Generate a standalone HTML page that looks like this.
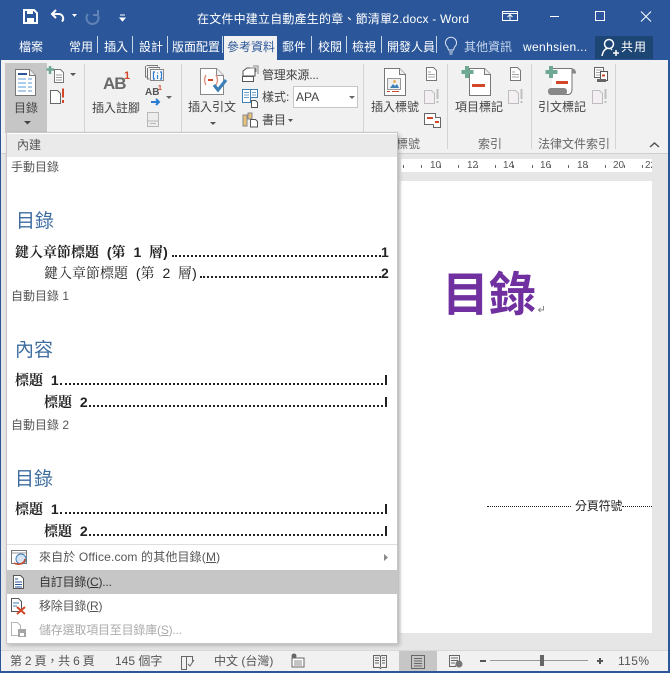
<!DOCTYPE html>
<html lang="zh-Hant"><head><meta charset="utf-8"><title>Word</title>
<style>
html,body{margin:0;padding:0}
body{width:670px;height:673px;overflow:hidden;position:relative;background:#E6E6E6;font-family:"Liberation Sans","Noto Sans CJK TC",sans-serif;font-size:12px;color:#444}
.a{position:absolute}
.t{position:absolute;white-space:nowrap;line-height:16px;font-size:12px;color:#444}
.w{color:#fff}
.sep{position:absolute;top:64px;height:85px;width:1px;background:#D4D4D4}
.tabsep{position:absolute;top:36px;height:17px;width:1px;background:#C9D6E8}
.toc{position:absolute;white-space:nowrap;font-size:14px;line-height:16px;color:#222;font-family:"Liberation Sans","Noto Serif CJK SC",serif;font-weight:700;word-spacing:4px}
.lead{position:absolute;height:0;border-bottom:2px dotted #222}
.h{position:absolute;color:#3E6DA0;font-size:19px;line-height:24px;white-space:nowrap}
.l{position:absolute;font-size:12px;line-height:16px;color:#555;white-space:nowrap}
.r{position:absolute;font-size:10px;line-height:12px;color:#555;top:160px}
svg{position:absolute;left:0;top:0;overflow:visible}
</style></head><body>
<div class="a" style="left:0;top:0;width:670px;height:60px;background:#2B579A"></div>
<div class="a" style="left:0;top:60px;width:670px;height:93px;background:#F1F1F1"></div>
<div class="a" style="left:0;top:153px;width:670px;height:1px;background:#D0D0D0"></div>
<div class="a" style="left:401px;top:159px;width:251px;height:13px;background:#fff"></div>
<div class="a" style="left:401px;top:181px;width:251px;height:452px;background:#fff"></div>
<div class="a" style="left:399px;top:181px;width:2px;height:452px;background:#EFEFEF"></div>
<div class="a" style="left:0;top:650px;width:670px;height:21px;background:#F1F1F1;border-top:1px solid #D8D8D8;box-sizing:border-box"></div>
<div class="a" style="left:399px;top:651px;width:38px;height:20px;background:#C6C6C6"></div>
<div class="a" style="left:0;top:671px;width:670px;height:2px;background:#2B579A"></div>
<div class="a" style="left:0;top:60px;width:1px;height:611px;background:#2B579A"></div>
<div class="a" style="left:668px;top:60px;width:2px;height:611px;background:#2B579A"></div>

<div class="t w" style="left:197px;top:11px;letter-spacing:.2px">在文件中建立自動產生的章、節清單2.docx - Word</div>
<div class="a" style="left:224px;top:36px;width:53px;height:24px;background:#F1F1F1"></div>
<div class="a" style="left:595px;top:36px;width:58px;height:23px;background:#1D4675"></div>
<div class="t w" style="left:19px;top:39px">檔案</div>
<div class="t w" style="left:69px;top:39px">常用</div><div class="tabsep" style="left:97px"></div>
<div class="t w" style="left:104px;top:39px">插入</div><div class="tabsep" style="left:132px"></div>
<div class="t w" style="left:139px;top:39px">設計</div><div class="tabsep" style="left:167px"></div>
<div class="t w" style="left:172px;top:39px">版面配置</div><div class="tabsep" style="left:222px"></div>
<div class="t" style="left:227px;top:39px;color:#2B579A">參考資料</div>
<div class="t w" style="left:282px;top:39px">郵件</div><div class="tabsep" style="left:311px"></div>
<div class="t w" style="left:318px;top:39px">校閱</div><div class="tabsep" style="left:346px"></div>
<div class="t w" style="left:352px;top:39px">檢視</div><div class="tabsep" style="left:381px"></div>
<div class="t w" style="left:387px;top:39px">開發人員</div><div class="tabsep" style="left:436px"></div>
<div class="t" style="left:464px;top:39px;color:#C9D8EE">其他資訊</div>
<div class="t w" style="left:523px;top:39px;letter-spacing:.35px">wenhsien...</div>
<div class="t w" style="left:621px;top:39px;letter-spacing:1px">共用</div>

<div class="a" style="left:5px;top:63px;width:42px;height:70px;background:#C6C6C6"></div>
<div class="sep" style="left:84px"></div><div class="sep" style="left:181px"></div><div class="sep" style="left:363px"></div><div class="sep" style="left:447px"></div><div class="sep" style="left:531px"></div><div class="sep" style="left:615px"></div>
<div class="t" style="left:14px;top:100px">目錄</div>
<div class="t" style="left:92px;top:100px">插入註腳</div>
<div class="t" style="left:188px;top:99px">插入引文</div>
<div class="t" style="left:262px;top:67px;letter-spacing:-.2px">管理來源...</div>
<div class="t" style="left:262px;top:89px">樣式:</div>
<div class="a" style="left:293px;top:86px;width:65px;height:22px;background:#fff;border:1px solid #C6C6C6;box-sizing:border-box"></div>
<div class="t" style="left:296px;top:89px">APA</div>
<div class="t" style="left:262px;top:112px">書目</div>
<div class="t" style="left:371px;top:99px">插入標號</div>
<div class="t" style="left:455px;top:99px">項目標記</div>
<div class="t" style="left:538px;top:99px">引文標記</div>
<div class="t" style="left:478px;top:136px;color:#666">索引</div>
<div class="t" style="left:538px;top:136px;color:#666">法律文件索引</div>
<div class="t" style="left:396px;top:136px;color:#666">標號</div>
<div class="a" style="left:103px;top:74px;font-size:17px;line-height:20px;font-weight:700;color:#6A6A6A;letter-spacing:-1px">AB</div>
<div class="a" style="left:124px;top:70px;font-size:11px;line-height:12px;font-weight:700;color:#D24726">1</div>
<div class="a" style="left:145px;top:87px;font-size:10px;line-height:12px;font-weight:700;color:#555">AB</div>
<div class="a" style="left:158px;top:85px;font-size:7px;line-height:8px;font-weight:700;color:#D24726">1</div>

<div class="r" style="left:430px">10</div><div class="r" style="left:467px">12</div><div class="r" style="left:503px">14</div><div class="r" style="left:540px">16</div><div class="r" style="left:577px">18</div><div class="r" style="left:613px">20</div><div class="r" style="left:645px;width:7px;overflow:hidden">22</div>

<div class="a" style="left:442px;top:265px;font-size:47px;line-height:60px;font-weight:700;color:#7030A0;white-space:nowrap">目錄</div>
<div class="lead" style="left:487px;top:506px;width:84px;border-bottom-width:1px;border-color:#222"></div>
<div class="t" style="left:575px;top:498px;color:#222;letter-spacing:-.2px">分頁符號</div>
<div class="lead" style="left:622px;top:506px;width:30px;border-bottom-width:1px;border-color:#222"></div>

<div class="t" style="left:10px;top:653px;color:#555;letter-spacing:-.2px">第 2 頁，共 6 頁</div>
<div class="t" style="left:115px;top:653px;color:#555">145 個字</div>
<div class="t" style="left:214px;top:653px;color:#555">中文 (台灣)</div>
<div class="t" style="left:618px;top:653px;color:#555;letter-spacing:.4px">115%</div>

<div class="a" style="left:6px;top:132px;width:392px;height:512px;background:#fff;border:1px solid #C6C6C6;box-sizing:border-box;box-shadow:2px 2px 4px rgba(0,0,0,.2)"></div>
<div class="a" style="left:7px;top:134px;width:390px;height:23px;background:#EAEAEA"></div>
<div class="t" style="left:17px;top:137px;color:#555">內建</div>
<div class="l" style="left:11px;top:159px">手動目錄</div>
<div class="h" style="left:16px;top:210px">目錄</div>
<div class="toc" style="left:15px;top:244px">鍵入章節標題 (第 1 層)</div><div class="lead" style="left:172px;top:255px;width:209px"></div><div class="toc" style="left:381px;top:244px">1</div>
<div class="toc" style="left:44px;top:265px;font-weight:400">鍵入章節標題 (第 2 層)</div><div class="lead" style="left:200px;top:276px;width:181px"></div><div class="toc" style="left:381px;top:265px">2</div>
<div class="l" style="left:11px;top:288px">自動目錄 1</div>
<div class="h" style="left:15px;top:339px">內容</div>
<div class="toc" style="left:15px;top:372px">標題 1</div><div class="lead" style="left:60px;top:383px;width:323px"></div><div class="a" style="left:385px;top:375px;width:2px;height:10px;background:#222"></div>
<div class="toc" style="left:44px;top:394px">標題 2</div><div class="lead" style="left:89px;top:405px;width:294px"></div><div class="a" style="left:385px;top:397px;width:2px;height:10px;background:#222"></div>
<div class="l" style="left:11px;top:417px">自動目錄 2</div>
<div class="h" style="left:15px;top:468px">目錄</div>
<div class="toc" style="left:15px;top:501px">標題 1</div><div class="lead" style="left:60px;top:512px;width:323px"></div><div class="a" style="left:385px;top:504px;width:2px;height:10px;background:#222"></div>
<div class="toc" style="left:44px;top:523px">標題 2</div><div class="lead" style="left:89px;top:534px;width:294px"></div><div class="a" style="left:385px;top:526px;width:2px;height:10px;background:#222"></div>
<div class="a" style="left:7px;top:544px;width:390px;height:1px;background:#DEDEDE"></div>
<div class="a" style="left:7px;top:570px;width:390px;height:24px;background:#C6C6C6"></div>
<div class="t" style="left:39px;top:549px;color:#555;letter-spacing:.15px">來自於 Office.com 的其他目錄(<u>M</u>)</div>
<div class="t" style="left:39px;top:574px;color:#333;letter-spacing:-.2px">自訂目錄(<u>C</u>)...</div>
<div class="t" style="left:39px;top:598px;color:#555;letter-spacing:-.2px">移除目錄(<u>R</u>)</div>
<div class="t" style="left:39px;top:622px;color:#ABABAB;letter-spacing:-.2px">儲存選取項目至目錄庫(<u>S</u>)...</div>

<svg width="670" height="673" viewBox="0 0 670 673" fill="none">
<!-- QAT -->
<path d="M24 10h10l3 3v10H24z" stroke="#fff" stroke-width="2"/><path d="M27 10h6v4h-6zM27 18h7v5h-7z" fill="#fff"/>
<path d="M56 10l-4 4 4 4M52 14h7a4.5 4.5 0 0 1 3 7.500" stroke="#fff" stroke-width="2"/><path d="M72 14h5l-2.500 3z" fill="#fff"/>
<path d="M98 10v5h-5M97 14a6 6 0 1 1-9 0" stroke="#6E8DBB" stroke-width="2" opacity=".8"/>
<path d="M120 15h5M120 18h5l-2.500 3z" stroke="#fff" fill="#fff"/>
<!-- window controls -->
<rect x="502.500" y="11.500" width="15" height="9" stroke="#fff"/><path d="M502 13.500h16M510 20v-5M507.500 17l2.500-2.500 2.500 2.500" stroke="#fff"/>
<path d="M550 16.500h9" stroke="#fff"/><rect x="595.500" y="11.500" width="9" height="9" stroke="#fff" stroke-width="1"/><path d="M641 11.500l10 10M651 11.500l-10 10" stroke="#fff"/>
<!-- bulb -->
<path d="M447.500 47a5.500 5.500 0 1 1 7 0l-1 3h-5z M449 52h4M449.500 54h3" stroke="#DDE6F3"/>
<!-- person -->
<circle cx="609" cy="44" r="4.500" stroke="#fff" stroke-width="1.500"/><path d="M602 56c1-5 3-7 5-7.500M611 49l1 1M613 53h6M616 50v6" stroke="#fff" stroke-width="1.500"/>
<!-- TOC icon -->
<path d="M15.500 69.500h14l6 6v20h-20z" fill="#fff" stroke="#777"/><path d="M29.500 69.500v6h6" fill="#eee" stroke="#777"/>
<path d="M18 74h9" stroke="#2B579A" stroke-width="2"/><path d="M18 79h8M28 79h4M18 83h8M28 83h4M18 87h8M28 87h4M18 91h8M28 91h4" stroke="#5B9BD5"/>
<path d="M24 121h7l-3.500 3.500z" fill="#444"/>
<!-- add text -->
<path d="M54.500 69.500h6l3 3v10h-9z" fill="#fff" stroke="#777"/><path d="M56 75h6M56 77.500h6M56 80h6" stroke="#777" stroke-width=".8"/><path d="M50 66v8M46.500 69.500h7.500" stroke="#6FA893" stroke-width="2.500"/><path d="M70 73h6l-3 3z" fill="#555"/>
<!-- update table -->
<path d="M50.500 90.500h7l3 3v10h-10z" fill="#fff" stroke="#666"/><path d="M63 88.500v9M63 100v3" stroke="#D24726" stroke-width="2"/>
<!-- footnote group -->
<path d="M146.500 65.500h11v1M148.500 67.500h11v1M145.500 66v11h2M147.500 68v11h2" stroke="#777"/><rect x="150.500" y="69.500" width="13" height="11" fill="#f8f8f8" stroke="#888"/>
<path d="M155 72h-1.500v7h1.500M160 72h1.500v7H160M157.500 72.500v1M157.500 75v4" stroke="#2B7CD3" stroke-width="1.200"/>
<path d="M151 102h8m-3-3l3 3-3 3" stroke="#2B7CD3" stroke-width="2"/>
<path d="M166 96h6l-3 3z" fill="#666"/>
<rect x="147.500" y="112.500" width="11" height="14" fill="#EDEDED" stroke="#B8B8B8"/><path d="M148 121h10" stroke="#B8B8B8"/><path d="M150 123.500h6" stroke="#B8B8B8"/>
<!-- citation -->
<path d="M200.500 68.500h16l7 7v19h-23z" fill="#fff" stroke="#888"/><path d="M216.500 68.500v7h7" fill="#eee" stroke="#888"/>
<path d="M206 75q-3 5 0 10M216 75q3 5 0 10" stroke="#E08A78" stroke-width="1.300"/><path d="M208 80h5" stroke="#D24726" stroke-width="2"/>
<path d="M214 85l4 5 8-10" stroke="#3D80B8" stroke-width="3.200"/>
<path d="M210 122h6l-3 3z" fill="#555"/>
<path d="M243 76v-5l4-3h8v8h-12zM242.500 76.500h11v5h-11z" fill="#fff" stroke="#555"/><path d="M250 68h6v4M253 66h5v8" stroke="#888"/>
<rect x="242.500" y="89.500" width="8" height="13" fill="#fff" stroke="#3D80B8"/><rect x="250.500" y="89.500" width="7" height="8" fill="#fff" stroke="#3D80B8"/><path d="M244 92.500h5M244 95h5M244 97.500h5M252 92.500h4M252 95h4" stroke="#3D80B8" stroke-width=".8"/><path d="M251.500 100.500h4l2 2v5h-6z" fill="#fff" stroke="#555"/>
<path d="M243 115h4v11h-4zM248 113h4v6h-4z" fill="#E8C27A" stroke="#888"/><path d="M250.500 119.500h5l2 2v5.500h-7z" fill="#fff" stroke="#555"/>
<path d="M288 119h5l-2.500 3z" fill="#555"/>
<path d="M349 96h6l-3 3z" fill="#666"/>
<!-- caption -->
<path d="M384.500 68.500h15l6 6v21h-21z" fill="#fff" stroke="#777"/><path d="M399.500 68.500v6h6" fill="#eee" stroke="#777"/>
<rect x="387.500" y="78.500" width="13" height="11" fill="#EFEFEF" stroke="#999"/><path d="M390 88l3-4 2 2 2-2 2 4z" fill="#3D80B8"/><circle cx="394.500" cy="81.500" r="1.500" fill="#E8B060"/><path d="M387 91.500h3M392 91.500h7" stroke="#D24726"/>
<path d="M426.500 67.500h7l3 3v10h-10z" fill="#fff" stroke="#777"/><path d="M428 72h3M428 74.500h7M428 77h7" stroke="#888" stroke-width=".8"/>
<path d="M424.500 90.500h7l3 3v10h-10z" fill="#F3EFF3" stroke="#BEBEBE"/><path d="M437.500 89v10M437.500 101v2" stroke="#BEBEBE" stroke-width="2"/>
<rect x="424.500" y="113.500" width="11" height="11" fill="#fff" stroke="#666"/><path d="M427 118h6" stroke="#D24726" stroke-width="2"/><path d="M435.500 117.500h5v10h-7v-3" fill="#fff" stroke="#666"/><path d="M435 122h4" stroke="#D24726" stroke-width="2"/>
<!-- mark entry -->
<path d="M469.500 68.500h15l6 6v21h-21z" fill="#fff" stroke="#777"/><path d="M484.500 68.500v6h6" fill="#eee" stroke="#777"/>
<path d="M467 66v12M461.500 72h12" stroke="#6FA893" stroke-width="4"/><path d="M472 85.500h13" stroke="#D24726" stroke-width="3"/>
<path d="M510.500 67.500h7l3 3v10h-10z" fill="#fff" stroke="#777"/><path d="M512 72h3M512 74.500h7M512 77h7" stroke="#888" stroke-width=".8"/>
<path d="M508.500 90.500h7l3 3v10h-10z" fill="#F3EFF3" stroke="#BEBEBE"/><path d="M521.500 89v10M521.500 101v2" stroke="#BEBEBE" stroke-width="2"/>
<!-- mark citation -->
<path d="M553 68.500h19v20q0 6-4 6h-17" fill="#fff" stroke="#777"/><path d="M572 68.500q4 0 4 5h-4z" fill="#888"/><rect x="548" y="88" width="19" height="7" rx="3" fill="#888"/>
<path d="M551 66v12M545.500 72h12" stroke="#6FA893" stroke-width="4"/><path d="M556 82.500h12" stroke="#D24726" stroke-width="3"/>
<rect x="594.500" y="67.500" width="9" height="10" fill="#fff" stroke="#666"/><path d="M596 70h6M596 72.500h6M596 75h6" stroke="#888" stroke-width=".8"/><path d="M600.500 71.500h7v9h-7z" fill="#fff" stroke="#555"/><path d="M602 75.500h3" stroke="#D24726" stroke-width="2"/><rect x="597" y="79" width="9" height="3" fill="#666"/>
<path d="M592.500 90.500h7l3 3v10h-10z" fill="#F3EFF3" stroke="#BEBEBE"/><path d="M605.500 89v10M605.500 101v2" stroke="#BEBEBE" stroke-width="2"/>
<path d="M650 147l4.500-4 4.500 4" stroke="#555" stroke-width="1.500"/>
<!-- ruler ticks -->
<path d="M403.500 165v3M421.500 165v3M440.500 165v3M458.500 165v3M477.500 165v3M495.500 165v3M513.500 165v3M532.500 165v3M550.500 165v3M568.500 165v3M587.500 165v3M605.500 165v3M624.500 165v3M642.500 165v3" stroke="#666"/>
<!-- return mark -->
<path d="M543.500 306v4h-5m2-2l-2 2 2 2" stroke="#888"/>
<!-- menu icons -->
<rect x="11.500" y="550.500" width="15" height="13" fill="#fff" stroke="#777"/><path d="M12 553h14" stroke="#999"/><circle cx="21" cy="559" r="5" fill="#D5E3F3" stroke="#3D80B8"/><path d="M14 563q5 3 10-1l1-3" stroke="#D24726" stroke-width="1.500"/>
<path d="M13.500 575.500h7l3 3v10h-10z" fill="#fff" stroke="#555"/><path d="M15 579h3M15 582h7M15 584.500h7M15 587h7" stroke="#2B579A" stroke-width=".9"/>
<path d="M11.500 598.500h7l3 3v10h-10z" fill="#fff" stroke="#555"/><path d="M13 603h6M13 606h4" stroke="#3D80B8"/><path d="M17 607l8 7M25 607l-8 7" stroke="#D24726" stroke-width="2"/>
<path d="M11.500 622.500h6l3 3v10h-9z" fill="#fff" stroke="#B5B5B5"/><rect x="18" y="629" width="8" height="8" fill="#A5A5A5"/><rect x="20" y="633" width="4" height="3" fill="#fff"/>
<path d="M384 554v7l4-3.500z" fill="#888"/>
<!-- status icons -->
<path d="M181.500 656.500h5v13h-5zM186.500 656.500h6v5M188 664l2 2 4-6" stroke="#666"/>
<circle cx="294" cy="656" r="2.500" fill="#666"/><rect x="292" y="658" width="12" height="9" fill="#fff" stroke="#666"/><path d="M294 661h8M294 663h8M294 665h8" stroke="#666" stroke-width=".8"/>
<path d="M373.500 655.500h6l1 1 1-1h5v12h-5l-1 1-1-1h-6zM380.500 656v11M375 658h4M375 660.500h4M375 663h4M382 658h3M382 660.500h3M382 663h3" stroke="#666"/>
<rect x="411.500" y="655.500" width="13" height="13" stroke="#666"/><path d="M414 658.500h8M414 661h8M414 663.500h8M414 666h8" stroke="#666"/>
<path d="M449.500 655.500h10v8h-3l-1 3h-6zM451 658h7M451 660.500h7M451 663h4" stroke="#666"/><circle cx="459" cy="664" r="3.500" fill="#777"/>
<path d="M480 661h6M597 661h6M600 658v6" stroke="#555" stroke-width="2"/><path d="M490 660.500h98" stroke="#999"/><rect x="540" y="655" width="4" height="11" fill="#666"/>
</svg>
</body></html>
